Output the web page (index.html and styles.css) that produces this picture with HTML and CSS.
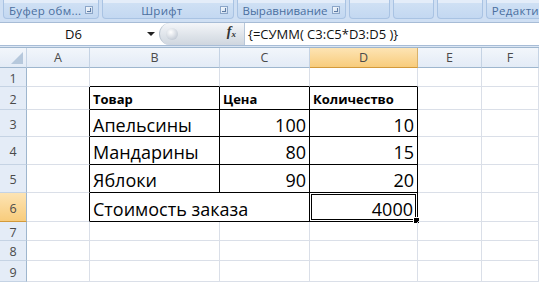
FILE: index.html
```html
<!DOCTYPE html>
<html>
<head>
<meta charset="utf-8">
<link rel="stylesheet" href="styles.css">
</head>
<body>
<div class="app">
  <div class="ribbon">
    <div class="grp g1"><span class="lbl">Буфер обм...</span><span class="launch"></span></div>
    <div class="grp g2"><span class="lbl">Шрифт</span><span class="launch"></span></div>
    <div class="grp g3"><span class="lbl">Выравнивание</span><span class="launch"></span></div>
    <div class="grp g4"></div>
    <div class="grp g5"></div>
    <div class="grp g6"></div>
    <div class="grp g7"><span class="lbl">Редакти</span></div>
  </div>
  <div class="fbar">
    <div class="namebox"><span class="nm">D6</span><span class="arrow"></span></div>
    <div class="pill"><span class="knob"></span><span class="fx">f<sub>x</sub></span></div>
    <div class="formula">{=СУММ( C3:C5*D3:D5 )}</div>
  </div>
  <div class="gap"></div>
  <div class="sheet">
    <div class="h corner"><span class="tri"></span></div>
    <div class="h">A</div><div class="h">B</div><div class="h">C</div><div class="h sel">D</div><div class="h">E</div><div class="h">F</div>

    <div class="r">1</div><div class="c"></div><div class="c bb"></div><div class="c bb"></div><div class="c bb"></div><div class="c"></div><div class="c"></div>

    <div class="r">2</div><div class="c br"></div><div class="c t th">Товар</div><div class="c t th">Цена</div><div class="c t th">Количество</div><div class="c"></div><div class="c"></div>

    <div class="r">3</div><div class="c br"></div><div class="c t big">Апельсины</div><div class="c t big num">100</div><div class="c t big num">10</div><div class="c"></div><div class="c"></div>

    <div class="r">4</div><div class="c br"></div><div class="c t big">Мандарины</div><div class="c t big num">80</div><div class="c t big num">15</div><div class="c"></div><div class="c"></div>

    <div class="r">5</div><div class="c br"></div><div class="c t big">Яблоки</div><div class="c t big num">90</div><div class="c t big num">20</div><div class="c"></div><div class="c"></div>

    <div class="r sel">6</div><div class="c br"></div><div class="c t big span2">Стоимость заказа</div><div class="c t big num active">4000<span class="handle"></span></div><div class="c"></div><div class="c"></div>

    <div class="r">7</div><div class="c"></div><div class="c"></div><div class="c"></div><div class="c"></div><div class="c"></div><div class="c"></div>
    <div class="r">8</div><div class="c"></div><div class="c"></div><div class="c"></div><div class="c"></div><div class="c"></div><div class="c"></div>
    <div class="r">9</div><div class="c"></div><div class="c"></div><div class="c"></div><div class="c"></div><div class="c"></div><div class="c"></div>
  </div>
</div>
</body>
</html>
```
FILE: styles.css
```css
* { box-sizing: border-box; }
html, body { margin: 0; padding: 0; background: #fff; }
body { width: 539px; height: 282px; overflow: hidden; font-family: "Open Sans", "Noto Sans", sans-serif; }
.app { display: flex; flex-direction: column; width: 539px; height: 282px; overflow: hidden; background: #dbe6f4; }

.ribbon { display: flex; height: 22px; background: #cfdff3; padding: 0 0 0 3px; gap: 3px; }
.grp { position: relative; height: 19px; display: flex; align-items: center; justify-content: center;
  border: 1px solid #a9c3e3; border-top: none; border-radius: 0 0 4px 4px;
  background: linear-gradient(#e4edf9 0 3px, #cfe0f4 3px, #c3d8f1); }
.grp .lbl { font-size: 11.5px; color: #4a6f9f; letter-spacing: 0.3px; margin-top: 2px; white-space: nowrap; }
.g1 { width: 98px; justify-content: flex-start; padding-left: 5px; }
.g2 { width: 134px; padding-right: 12px; }
.g3 { width: 112px; justify-content: flex-start; padding-left: 5px; }
.g3 .lbl { letter-spacing: 0; }
.g4 { width: 41px; }
.g5 { width: 42px; }
.g6 { width: 47px; }
.g7 { flex: 1; justify-content: flex-start; padding-left: 5px; border-right: none; border-radius: 0 0 0 4px; }
.launch { position: absolute; right: 5px; top: 6px; width: 8px; height: 8px; border: 1px solid #8ca6c8;
  background: linear-gradient(135deg, #f4f8fc, #cddcee); }
.launch::after { content: ""; position: absolute; right: 1px; bottom: 1px; width: 3px; height: 3px; border-right: 1px solid #5d7ba3; border-bottom: 1px solid #5d7ba3; }

.fbar { display: flex; height: 24px; background: #fff; border-top: 1px solid #a7bcd6; border-bottom: 1px solid #a7bcd6; }
.namebox { width: 159px; position: relative; display: flex; align-items: center; justify-content: center; }
.nm { font-size: 13px; color: #111; margin-right: 12px; }
.arrow { position: absolute; right: 4px; top: 9px; width: 0; height: 0; border-left: 4px solid transparent; border-right: 4px solid transparent; border-top: 4px solid #222; }
.pill { width: 85px; position: relative; border-radius: 11px 0 0 11px; background: linear-gradient(#f4f6f9, #dfe4ea 55%, #cfd6df); border-left: 1px solid #b9c3cf; }
.knob { position: absolute; left: 6px; top: 5px; width: 12px; height: 12px; border-radius: 50%; background: radial-gradient(circle at 40% 35%, #ffffff, #c7ced8 70%, #b0b9c5); }
.fx { position: absolute; right: 8px; top: 1px; font-family: "Liberation Serif", serif; font-style: italic; font-weight: bold; font-size: 14px; color: #333; }
.fx sub { font-size: 9px; vertical-align: -1px; }
.formula { flex: 1; border-left: 1px solid #b7c6d8; padding-left: 3px; font-size: 13px; line-height: 22px; color: #111; }

.gap { height: 2px; background: #dbe6f4; border-bottom: 1px solid #9eb6ce; }

.sheet { display: grid; grid-template-columns: 27px 63px 130px 90px 108px 64px 57px;
  grid-template-rows: 20px 19px 23px 27px 28px 28px 29px 19px 20px 21px; background: #fff; }
.h { background: linear-gradient(#f2f6fb, #e3ebf6); border-right: 1px solid #c5d3e4; border-bottom: 1px solid #9eb6ce;
  font-size: 12.5px; color: #4a4a4a; display: flex; align-items: center; justify-content: center; }
.h.sel { background: linear-gradient(#fde4b4, #f8cc7c); border-right-color: #d9b26a; border-bottom-color: #d39a3b; }
.corner { position: relative; }
.tri { position: absolute; right: 3px; bottom: 3px; width: 0; height: 0; border-left: 12px solid transparent; border-bottom: 12px solid #b6c8dc; }
.r { background: #e4ecf7; border-right: 1px solid #9eb6ce; border-bottom: 1px solid #c5d3e4;
  font-size: 12.5px; color: #4a4a4a; display: flex; align-items: center; justify-content: center; padding-top: 2px; }
.r.sel { background: linear-gradient(#fde4b4, #f8cc7c); border-bottom-color: #d39a3b; }
.c { border-right: 1px solid #dadfe8; border-bottom: 1px solid #dadfe8; position: relative; }
.c.bb { border-bottom-color: #000; }
.c.br { border-right-color: #000; }
.c.t { border-right-color: #000; border-bottom-color: #000; display: flex; align-items: center; padding: 0 3px; color: #000; white-space: nowrap; }
.th { font-weight: bold; font-size: 13px; padding-top: 2px !important; }
.big { font-size: 18px; padding-top: 3px !important; }
.num { justify-content: flex-end; }
.span2 { grid-column: span 2; }
.active { box-shadow: inset 0 0 0 1px #fff, inset 0 0 0 2px #000; padding-right: 4px !important; }
.handle { position: absolute; right: -3px; bottom: -3px; width: 5px; height: 5px; background: #000; border: 1px solid #fff; box-sizing: content-box; }
```
